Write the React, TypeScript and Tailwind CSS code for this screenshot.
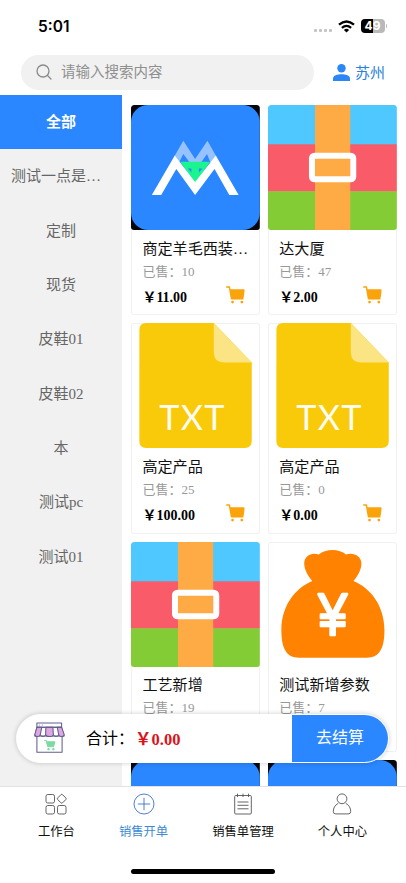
import type { ReactNode } from "react";

const categories = ["全部", "测试一点是…", "定制", "现货", "皮鞋01", "皮鞋02", "本", "测试pc", "测试01"];

type Product = {
  name?: string;
  sold?: number;
  price?: string;
  image: ReactNode;
};

function LogoImage() {
  return (
    <svg viewBox="0 0 128 125" preserveAspectRatio="none" className="block h-full w-full">
      <rect width="128" height="125" fill="#05070c" />
      <rect width="128" height="125" rx="17" fill="#2a87ff" />
      <path d="M43.3 51 52 35.7 63.7 54 76 35.7 84.5 51 80 60 75.5 49 70 57 58 57 52 49 46.5 60Z" fill="#96c3ff" />
      <path d="M49 56.7H78.5L63.7 79Z" fill="#1bf58f" />
      <path d="M56.5 63.5h3.5v4zM71 63.5h-3.5v4z" fill="#2a87ff" />
      <path d="M43.5 50.5 63.7 77 84.3 50.5 107 90H97.7L83 64 63.7 90 45 64 30 90H20.7Z" fill="#fff" />
    </svg>
  );
}

function ZipImage() {
  return (
    <svg viewBox="0 0 128 125" preserveAspectRatio="none" className="block h-full w-full">
      <rect width="128" height="40" fill="#4fc7ff" />
      <rect y="39.3" width="128" height="47.5" fill="#f95c68" />
      <rect y="86.3" width="128" height="38.7" fill="#84cc36" />
      <rect x="46.7" width="35" height="125" fill="#ffab45" />
      <rect x="43.7" y="50.7" width="41" height="23.6" rx="2.5" fill="none" stroke="#fff" strokeWidth="6" />
    </svg>
  );
}

function TxtImage() {
  return (
    <svg viewBox="0 0 128 125" preserveAspectRatio="none" className="block h-full w-full">
      <path d="M15 0H82.3L120 39.5V118Q120 125 113 125H15Q8.3 125 8.3 118V7Q8.3 0 15 0Z" fill="#f9ca0a" />
      <path d="M82.3 0 120 39.5H93Q82.3 39.5 82.3 29Z" fill="#fbe483" />
      <text
        x="28"
        y="107"
        fontSize="34"
        textLength="65"
        fill="#fffdf0"
        className="font-['Lato',sans-serif]"
      >
        TXT
      </text>
    </svg>
  );
}

function MoneyImage() {
  return (
    <svg viewBox="0 0 128 125" preserveAspectRatio="none" className="block h-full w-full">
      <path
        d="M44 39C39 33 36 27 36 21.5C36 14 43 10 50.5 12.5C57 6.5 71 6.5 77.5 12.5C85 10 92.8 14 92.8 21.5C92.8 27 90 33 85 39C102 46 115.7 64 115.7 88C115.7 106 111 115.7 98 115.7H31C18 115.7 13.3 106 13.3 88C13.3 64 27 46 44 39Z"
        fill="#ff8200"
      />
      <text
        transform="translate(64.3 93) scale(0.86 1)"
        fontSize="60"
        textAnchor="middle"
        fill="#fff"
        stroke="#fff"
        strokeWidth="2.5"
        strokeLinecap="round"
        strokeLinejoin="round"
        className="font-['Liberation_Sans',sans-serif]"
      >
        ¥
      </text>
    </svg>
  );
}

const products: Product[] = [
  { name: "商定羊毛西装…", sold: 10, price: "11.00", image: <LogoImage /> },
  { name: "达大厦", sold: 47, price: "2.00", image: <ZipImage /> },
  { name: "高定产品", sold: 25, price: "100.00", image: <TxtImage /> },
  { name: "高定产品", sold: 0, price: "0.00", image: <TxtImage /> },
  { name: "工艺新增", sold: 19, image: <ZipImage /> },
  { name: "测试新增参数", sold: 7, image: <MoneyImage /> },
  { image: <LogoImage /> },
  { image: <LogoImage /> },
];

function CartIcon() {
  return (
    <svg viewBox="0 0 18 17" className="h-[18px] w-[19px]">
      <path d="M.7.9H3.2L5.2 12H16" fill="none" stroke="#fba30a" strokeWidth="1.4" strokeLinecap="round" strokeLinejoin="round" />
      <path d="M3.8 3H16.5Q17.7 3 17.6 4.2L16.9 10.5Q16.7 12 15.2 12H5.2Z" fill="#fba30a" />
      <circle cx="6.2" cy="15.2" r="1.3" fill="#fba30a" />
      <circle cx="15" cy="15.2" r="1.3" fill="#fba30a" />
    </svg>
  );
}

function ProductCard({ product }: { product: Product }) {
  return (
    <article className="h-[210.3px] overflow-hidden rounded-[3px] bg-white shadow-[inset_0_0_0_1px_#f1f1f3]">
      <div className="h-[125px] overflow-hidden rounded-[3px]">{product.image}</div>
      {product.name ? (
        <div className="pt-[7.5px] pr-[11px] pl-[11px]">
          <h3 className="h-[22px] text-[15.1px] leading-[22px] whitespace-nowrap text-[#111]">{product.name}</h3>
          <p className="mt-[3px] h-[18px] text-[13px] leading-[18px] text-[#999]">已售：{product.sold}</p>
          {product.price ? (
            <div className="mt-[5px] flex h-[22px] items-center justify-between pr-[4px]">
              <span className="pt-[3px] text-[14px] leading-[20px] font-bold text-black">￥{product.price}</span>
              <span className="-mt-[3px]">
                <CartIcon />
              </span>
            </div>
          ) : null}
        </div>
      ) : null}
    </article>
  );
}

function StatusBar() {
  return (
    <div className="flex h-[54.5px] shrink-0 items-start justify-between pr-[19px] pl-[38px] font-['Inter',sans-serif]">
      <span className="mt-[17px] text-[15.5px] leading-[20px] font-semibold text-black">5:01</span>
      <div className="mt-[19px] flex h-[14px] items-center">
        <div className="mt-[9px] flex gap-[2px]">
          {[0, 1, 2, 3].map((dot) => (
            <span key={dot} className="h-[3px] w-[3px] rounded-[1px] bg-[#c4c4c4]" />
          ))}
        </div>
        <svg viewBox="0 0 17 13" className="ml-[5.5px] h-[13px] w-[17px]" fill="none" stroke="#000" strokeWidth="2.3">
          <path d="M1 4.7Q8.5-1.7 16 4.7" />
          <path d="M3.9 7.8Q8.5 4 13.1 7.8" />
          <path d="M8.5 12.5 5.9 9.9Q8.5 7.7 11.1 9.9Z" fill="#000" stroke="none" />
        </svg>
        <div className="ml-[6px] flex h-[14px] w-[24px] items-center justify-center rounded-[4px] bg-linear-to-r from-black from-50% to-[#b9b9b9] to-50% text-[12px] leading-[14px] font-bold text-white">
          49
        </div>
        <span className="ml-[1px] h-[4px] w-[1.5px] rounded-r-full bg-[#bbb]" />
      </div>
    </div>
  );
}

function ShopIcon() {
  return (
    <svg viewBox="0 0 32 33" className="h-[32px] w-[31px]" fill="none" stroke="#62608f" strokeWidth="1.1" strokeLinejoin="round">
      <path d="M3 13V31.3H29V13" fill="#fff" />
      <path d="M3 1H28.5V5.5H3Z" fill="#fff" />
      <path d="M3 5.5H28.5L31 14.5H.8Z" fill="#fff" />
      <path d="M3 5.5H8L6.5 13Q6 15 3.5 15Q1 15 .8 13Z" fill="#dfa6e4" />
      <path d="M12.2 5.5H19.5L20 13Q19.5 15 16 15Q12.3 15 12 13Z" fill="#dfa6e4" />
      <path d="M24 5.5H28.5L31.2 13Q31 15 28.5 15Q26 15 25.5 13Z" fill="#dfa6e4" />
      <path d="M6.5 13Q7 15 9.3 15Q11.5 15 12 13M20 13Q20.5 15 22.8 15Q25 15 25.5 13" />
      <path d="M5 3.2H6M8 3.2H9" strokeWidth=".8" />
      <g stroke="#7fd9a4">
        <path d="M10.5 19H12.5L14.5 25.5H20.5" />
        <path d="M13 20.3H21.5L20.3 25H14.5Z" fill="#7fd9a4" />
        <circle cx="15" cy="28" r=".7" fill="#7fd9a4" />
        <circle cx="20" cy="28" r=".7" fill="#7fd9a4" />
      </g>
    </svg>
  );
}

function CheckoutBar() {
  return (
    <div className="absolute right-[17px] bottom-[23.5px] left-[16px] flex h-[49px] items-center overflow-hidden rounded-full border border-white bg-white shadow-[0_0_5px_rgba(0,0,0,0.2)]">
      <div className="flex flex-1 items-center pl-[17px]">
        <ShopIcon />
        <span className="ml-[21px] pt-px text-[16px] leading-[24px] text-black">合计：</span>
        <span className="ml-px pt-[3px] text-[16.5px] leading-[24px] font-bold text-[#d9141b]">￥0.00</span>
      </div>
      <button type="button" className="h-full w-[96px] bg-[#2a87ff] text-[16px] text-white">
        去结算
      </button>
    </div>
  );
}

const tabs = [
  {
    label: "工作台",
    active: false,
    icon: (
      <>
        <rect x="1" y="1.5" width="8.5" height="8.5" rx="1.8" />
        <rect x="1" y="12.5" width="8.5" height="8.5" rx="1.8" />
        <rect x="12.5" y="12.5" width="8.5" height="8.5" rx="1.8" />
        <rect x="13.3" y="2.3" width="6.9" height="6.9" rx="1.2" transform="rotate(45 16.75 5.75)" />
      </>
    ),
  },
  {
    label: "销售开单",
    active: true,
    icon: (
      <>
        <circle cx="11" cy="11" r="10" />
        <path d="M11 4.8V17.2M4.8 11H17.2" />
      </>
    ),
  },
  {
    label: "销售单管理",
    active: false,
    icon: (
      <>
        <rect x="2.7" y="2.5" width="16.6" height="18.5" rx="1" />
        <path d="M5.5.7V4M11 .7V4M16.5.7V4M5.5 9H16.5M5.5 12.3H16.5M5.5 15.8H16.5" />
      </>
    ),
  },
  {
    label: "个人中心",
    active: false,
    icon: (
      <>
        <circle cx="11" cy="5.8" r="4.9" />
        <path d="M7.3 10.3C4 12 2.3 15 2.3 18.5Q2.3 20.9 4.7 20.9H17.3Q19.7 20.9 19.7 18.5C19.7 15 18 12 14.7 10.3" />
      </>
    ),
  },
];

function TabBar() {
  return (
    <nav className="flex h-[97px] shrink-0 flex-col items-center justify-between border-t border-[#e2e2e2] bg-white">
      <ul className="flex w-full justify-between pr-[39px] pl-[38px]">
        {tabs.map((tab) => (
          <li key={tab.label} className={tab.active ? "flex flex-col items-center text-[#3d8bd4]" : "flex flex-col items-center text-[#111]"}>
            <svg
              viewBox="0 0 22 22"
              className="mt-[6px] h-[22px] w-[22px]"
              fill="none"
              stroke={tab.active ? "#3b72c6" : "#555"}
              strokeWidth="0.9"
            >
              {tab.icon}
            </svg>
            <span className="mt-[8px] text-[12.3px] leading-[18px]">{tab.label}</span>
          </li>
        ))}
      </ul>
      <div className="mb-[9px] h-[5px] w-[144px] rounded-full bg-black" />
    </nav>
  );
}

export default function App() {
  return (
    <div className="flex h-[883px] w-[406px] flex-col overflow-hidden bg-white font-['Liberation_Serif','Noto_Sans_CJK_SC',sans-serif]">
      <StatusBar />

      <header className="flex h-[35.5px] shrink-0 items-center pl-[21px]">
        <div className="flex h-full w-[293px] items-center rounded-full bg-[#f1f1f1] pl-[15px]">
          <svg viewBox="0 0 16 16" className="h-[16px] w-[16px]" fill="none" stroke="#8a8a8a" strokeWidth="1.3" strokeLinecap="round">
            <circle cx="7" cy="7" r="6" />
            <path d="M11.5 11.5 15 15" />
          </svg>
          <span className="ml-[9px] pt-px text-[14.5px] text-[#8f8f8f]">请输入搜索内容</span>
        </div>
        <div className="ml-[19px] flex items-center text-[#2a80dd]">
          <svg viewBox="0 0 17 17" className="h-[17px] w-[17px]" fill="#2a87f5">
            <circle cx="8.5" cy="4.3" r="4.2" />
            <path d="M0 17V14.5C0 11.5 4.5 10.2 8.5 10.2S17 11.5 17 14.5V17Z" />
          </svg>
          <span className="ml-[5px] pt-[2px] text-[15px]">苏州</span>
        </div>
      </header>

      <main className="relative mt-[5px] flex min-h-0 flex-1 overflow-hidden">
        <aside className="w-[122px] shrink-0 bg-[#f1f1f1]">
          {categories.map((category, index) => (
            <div
              key={category}
              className={
                index === 0
                  ? "flex h-[54.35px] items-center justify-center bg-[#2a87ff] text-[15px] font-bold text-white"
                  : "flex h-[54.35px] items-center justify-center text-[15px] text-[#666]"
              }
            >
              <span className={category.length > 5 ? "w-[100px] whitespace-nowrap" : ""}>{category}</span>
            </div>
          ))}
        </aside>
        <section className="grid flex-1 auto-rows-max grid-cols-2 gap-[8px] pt-[10px] pr-[9px] pl-[9.4px]">
          {products.map((product, index) => (
            <ProductCard key={index} product={product} />
          ))}
        </section>
        <CheckoutBar />
      </main>

      <TabBar />
    </div>
  );
}
